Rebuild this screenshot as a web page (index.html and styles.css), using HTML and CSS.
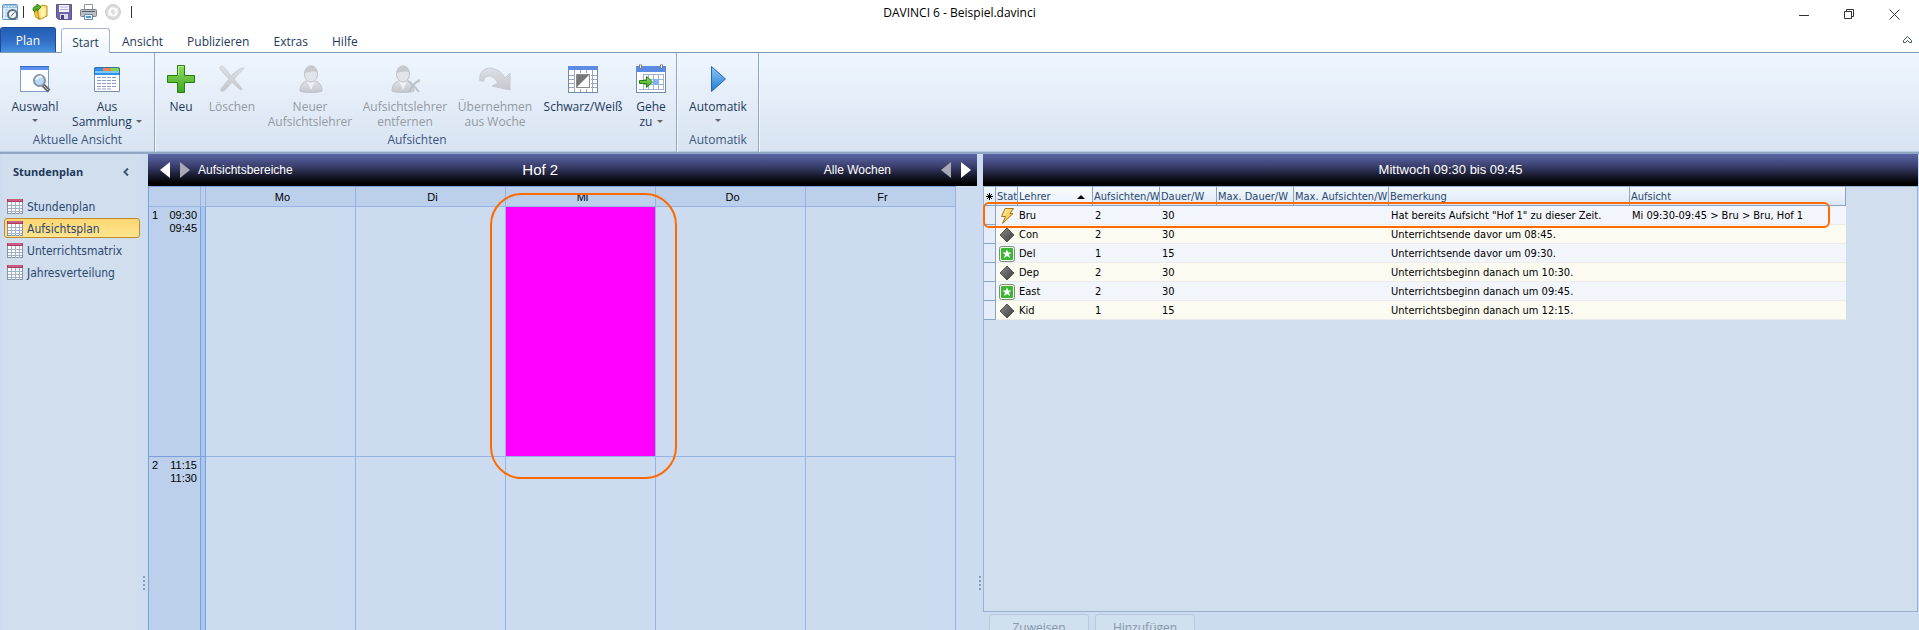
FILE: index.html
```html
<!DOCTYPE html>
<html lang="de">
<head>
<meta charset="utf-8">
<title>DAVINCI 6 - Beispiel.davinci</title>
<link rel="stylesheet" href="styles.css">
</head>
<body>
<svg class="defs" width="0" height="0" aria-hidden="true">
  <defs>
    <linearGradient id="gGreen" x1="0" y1="0" x2="0" y2="1"><stop offset="0" stop-color="#8fdc5a"/><stop offset="1" stop-color="#3fa524"/></linearGradient>
    <linearGradient id="gBlue" x1="0" y1="0" x2="0" y2="1"><stop offset="0" stop-color="#8ec8f5"/><stop offset="1" stop-color="#1f78d4"/></linearGradient>
    <linearGradient id="gGrey" x1="0" y1="0" x2="0" y2="1"><stop offset="0" stop-color="#dde0e5"/><stop offset="1" stop-color="#c4c8ce"/></linearGradient>
    <linearGradient id="gDark" x1="0" y1="0" x2="1" y2="1"><stop offset="0" stop-color="#8c8c8c"/><stop offset="1" stop-color="#3c3c3c"/></linearGradient>
    <linearGradient id="gGold" x1="0" y1="0" x2="1" y2="1"><stop offset="0" stop-color="#fff9c0"/><stop offset="1" stop-color="#f0a800"/></linearGradient>
    <symbol id="plan" viewBox="0 0 16 16">
      <rect x=".5" y=".5" width="15" height="14" fill="#fff" stroke="#8294b0"/>
      <path d="M0 0h16v3H0z" fill="#b03a62"/><path d="M1 1h14" stroke="#dc86a4"/>
      <path d="M1 6.500h14M1 9.500h14M1 12.500h14M4.500 3v12M8.500 3v12M12.500 3v12" stroke="#a3b0ca"/>
    </symbol>
    <symbol id="diamond" viewBox="0 0 16 16"><path d="M8 1l7 7-7 7-7-7z" fill="url(#gDark)" stroke="#555"/></symbol>
    <symbol id="star" viewBox="0 0 16 16">
      <rect x=".5" y=".5" width="15" height="15" rx="2" fill="#f2f7ef" stroke="#76936c"/>
      <rect x="2" y="2" width="12" height="12" rx="1" fill="#3fb535"/>
      <path d="M8 3.500l1.300 3h3.200L10 8.600l1 3.400-3-2-3 2 1-3.400-2.500-2.100h3.200z" fill="#fff"/>
    </symbol>
    <symbol id="bolt" viewBox="0 0 16 16"><path d="M6 .5h8.500L11 5.500h3L3.500 15.500l3-7H2.500z" fill="url(#gGold)" stroke="#a87414"/></symbol>
    <symbol id="person" viewBox="0 0 28 28">
      <path d="M3 26c0-6 3-9 7-10h8c4 1 7 4 7 10-3 2-19 2-22 0z" fill="url(#gGrey)" stroke="#bfc3c9"/>
      <path d="M10 16l4 9 4-9z" fill="#eef1f5"/>
      <ellipse cx="14" cy="9" rx="6.500" ry="8" fill="#e1e4e9" stroke="#bfc3c9"/>
      <path d="M7.500 8c0-10 13-10 13 0-2-3-9-1-13 0z" fill="#c6cacf"/>
    </symbol>
  </defs>
</svg>
<div class="app">
  <header class="titlebar">
    <div class="quick">
      <svg width="17" height="17" viewBox="0 0 17 17"><rect x=".5" y=".5" width="15" height="15" rx="1" fill="#dcecf8" stroke="#5f94c4"/><path d="M1 1h14v3H1z" fill="#9cc4e6"/><path d="M3 2.500h1M6 2.500h1M9 2.500h1M12 2.500h1" stroke="#fff"/><path d="M3 6h3M3 9h2M3 12h2" stroke="#a7c4de"/><circle cx="10.500" cy="10.500" r="4.500" fill="#f5f9fc" stroke="#5b7088" stroke-width="2"/><path d="M9 12.500l3-4" stroke="#49627c"/></svg>
      <span class="bar"></span>
      <button type="button" aria-label="Öffnen"><svg width="16" height="16" viewBox="0 0 16 16"><path d="M6 4l4-3 5 1v10l-6 3H6z" fill="#fbe37a" stroke="#b8901c"/><path d="M1.500 4l3 1 3 10-4-2z" fill="#f6cc3c" stroke="#b8901c"/><path d="M9 5l4-1v8l-4 2z" fill="#fff3b4"/><path d="M1 6c0-3 2-4 4-4V0l4 3-4 4V5C3 5 3 6 3 8z" fill="#52b52c" stroke="#2e7d15"/></svg></button>
      <button type="button" aria-label="Speichern"><svg width="16" height="16" viewBox="0 0 16 16"><path d="M.5.5h15v15h-13l-2-2z" fill="#7166a8" stroke="#5d5296"/><path d="M3 1h10v7H3z" fill="#f6f4fb"/><path d="M4 3h8M4 5.500h8" stroke="#b4aed2"/><path d="M4 10h8v5H4z" fill="#dcd9ea"/><path d="M5 11h3v4H5z" fill="#4b3f82"/></svg></button>
      <button type="button" aria-label="Drucken"><svg width="17" height="16" viewBox="0 0 17 16"><path d="M4.500 6V.5h8V6" fill="#fff" stroke="#8d96a0"/><rect x=".5" y="5.500" width="16" height="7" rx="1" fill="#b9bfc6" stroke="#7a828a"/><path d="M2 7.500h13" stroke="#555d66"/><path d="M4.500 10.500h8v5h-8z" fill="#e6f3fc" stroke="#70879c"/><path d="M6 13h5" stroke="#4e9ad4" stroke-width="2"/></svg></button>
      <button type="button" aria-label="Aktualisieren" disabled><svg width="16" height="16" viewBox="0 0 16 16"><circle cx="8" cy="8" r="7.500" fill="#dcdcdc" stroke="#cdcdcd"/><path d="M3.500 8.500C3 4 8 2 11 5l1.500-1.500v4h-4L10 6C8 4.500 5.500 5.500 5.500 8.500zM12.500 7.500C13 12 8 14 5 11l-1.500 1.500v-4h4L6 10c2 1.500 4.500.5 4.500-2.500z" fill="#fff"/></svg></button>
      <span class="bar last"></span>
    </div>
    <h1>DAVINCI 6 - Beispiel.davinci</h1>
    <div class="window-buttons">
      <button type="button" aria-label="Minimieren"><svg width="11" height="11" viewBox="0 0 11 11"><path d="M0 6.500h10" stroke="#333"/></svg></button>
      <button type="button" aria-label="Wiederherstellen"><svg width="11" height="11" viewBox="0 0 11 11"><path d="M.5 2.500h7v7h-7zM2.500 2.500v-2h7v7h-2" fill="none" stroke="#333"/></svg></button>
      <button type="button" aria-label="Schließen"><svg width="11" height="11" viewBox="0 0 11 11"><path d="M.5.500l10 10M10.500.5l-10 10" stroke="#333"/></svg></button>
    </div>
  </header>

  <nav class="tabs">
    <button type="button" class="tab file">Plan</button>
    <button type="button" class="tab active">Start</button>
    <button type="button" class="tab">Ansicht</button>
    <button type="button" class="tab">Publizieren</button>
    <button type="button" class="tab">Extras</button>
    <button type="button" class="tab">Hilfe</button>
    <button type="button" class="collapse" aria-label="Menüband minimieren"><svg width="9" height="8" viewBox="0 0 9 8"><path d="M.5 4.500l4-4 4 4v2h-2l-2-2-2 2h-2z" fill="#fff" stroke="#44546a"/></svg></button>
  </nav>

  <section class="ribbon">
    <div class="group">
      <div class="tools">
        <button type="button" class="tool w54"><svg width="32" height="32" viewBox="0 0 32 32"><rect x="1.500" y="3.500" width="28" height="25" fill="#fbfdff" stroke="#7f9cc8"/><path d="M1 3h29v4H1z" fill="#5b8ff0"/><path d="M1 3.500h29" stroke="#3a68c0"/><path d="M24 22l6 6" stroke="#6d6d6d" stroke-width="4"/><path d="M25 23l4 4" stroke="#bbb"/><circle cx="20.500" cy="17.500" r="5.500" fill="#b7d8f6" stroke="#8593a5" stroke-width="2"/><path d="M17 17c1-3 4-4 6-3" stroke="#f3faff" fill="none" stroke-width="2"/></svg><span>Auswahl</span><i class="caret"></i></button>
        <button type="button" class="tool w80"><svg width="32" height="32" viewBox="0 0 32 32"><path d="M3.500 11h25v17.500h-25z" fill="#fff" stroke="#7f90ac"/><path d="M3 12V6q0-2 2-2h22q2 0 2 2v6z" fill="#2f92ea"/><path d="M4 8h24v2H4z" fill="#7cc8fb"/><path d="M12 4h8v4h-8z" fill="#f08548"/><path d="M20 4h7q2 0 2 2v2h-9z" fill="#86d44a"/><path d="M3.500 12V6q0-1.500 2-1.500h21q2 0 2 1.500v6" stroke="#356fa8" fill="none"/><path d="M6 14.500h20M6 17.500h20M6 20.500h20M6 23.500h20M6 26h14" stroke="#8c9ac8" stroke-dasharray="4 1"/></svg><span>Aus</span><span>Sammlung <i class="caret"></i></span></button>
      </div>
      <h2>Aktuelle Ansicht</h2>
    </div>
    <div class="group wide">
      <div class="tools">
        <button type="button" class="tool w32"><svg width="32" height="32" viewBox="0 0 32 32"><path d="M12.500 2.500h7v10h10v7h-10v10h-7v-10h-10v-7h10z" fill="url(#gGreen)" stroke="#23820f"/><path d="M13.500 12V3.500h5" stroke="#bdf098" fill="none"/></svg><span>Neu</span></button>
        <button type="button" class="tool w52" disabled><svg width="32" height="32" viewBox="0 0 32 32"><path d="M4 4c2-2 4-1 11 9C20 8 26 4 28 5c0 1-6 6-10 11 5 6 9 10 8 11-3 0-8-6-10-8-4 5-8 11-11 9-2-2 4-7 8-12C8 11 3 6 4 4z" fill="url(#gGrey)" stroke="#ccd0d6"/></svg><span>Löschen</span></button>
        <button type="button" class="tool w86" disabled><svg width="32" height="32" viewBox="0 0 32 32"><use href="#person" x="3" y="1" width="28" height="30"/></svg><span>Neuer</span><span>Aufsichtslehrer</span></button>
        <button type="button" class="tool w86" disabled><svg width="32" height="32" viewBox="0 0 32 32"><use href="#person" x="0" y="1" width="28" height="30"/><path d="M19 18q5 3 11 11M31 17q-7 3-11 12" stroke="#bdc1c7" stroke-width="2" fill="none"/></svg><span>Aufsichtslehrer</span><span>entfernen</span></button>
        <button type="button" class="tool w76" disabled><svg width="34" height="32" viewBox="0 0 34 32"><path d="M2 18C0 8 9 3 16 6c5 1 9 5 11 9l5-5v17l-18-4 6-3c-3-5-7-8-10-7-4 1-4 3-4 5z" fill="url(#gGrey)" stroke="#c6cad0"/></svg><span>Übernehmen</span><span>aus Woche</span></button>
        <button type="button" class="tool w82"><svg width="32" height="32" viewBox="0 0 32 32"><rect x="1.500" y="3.500" width="29" height="26" fill="#fff" stroke="#7389a8"/><path d="M1 3h30v4H1z" fill="#5b8be4"/><path d="M2 12.500h28M2 16.500h28M2 20.500h28M2 24.500h28M7.500 7v22M13.500 7v22M19.500 7v22M25.500 7v22" stroke="#9aa9c2"/><rect x="8" y="10" width="16" height="16" fill="#fff"/><rect x="9.500" y="11.500" width="13" height="13" fill="#fff" stroke="#8a8a8a"/><path d="M10 12h12l-12 12z" fill="#777"/></svg><span>Schwarz/Weiß</span></button>
        <button type="button" class="tool w36"><svg width="32" height="32" viewBox="0 0 32 32"><rect x="1.500" y="3.500" width="29" height="26" fill="#fff" stroke="#7389a8"/><path d="M1 3h30v6H1z" fill="#5b8be4"/><path d="M8 11.500h21M8 16.500h21M8 21.500h21M4 26.500h25M8.500 11v16M13.500 11v16M18.500 11v16M23.500 11v16M28.500 11v16" stroke="#a5b2ca"/><rect x="18" y="16" width="6" height="6" fill="#86b0f6"/><path d="M4.500 17.500h7v-4l6 5.500-6 5.500v-4h-7z" fill="url(#gGreen)" stroke="#23820f"/><path d="M5.500 1.500v4M26.500 1.500v4" stroke="#7b7b7b" stroke-width="3"/><path d="M5.500 2v3M26.500 2v3" stroke="#eee"/></svg><span>Gehe</span><span>zu <i class="caret"></i></span></button>
      </div>
      <h2>Aufsichten</h2>
    </div>
    <div class="group">
      <div class="tools">
        <button type="button" class="tool w66"><svg width="32" height="32" viewBox="0 0 32 32"><path d="M9.500 3.500L23.500 16 9.500 28.500z" fill="url(#gBlue)" stroke="#2768ac"/></svg><span>Automatik</span><i class="caret"></i></button>
      </div>
      <h2>Automatik</h2>
    </div>
  </section>

  <main class="work">
    <aside class="sidebar">
      <div class="side-head"><h2>Stundenplan</h2><button type="button" aria-label="Einklappen"><svg width="6" height="8" viewBox="0 0 6 8"><path d="M5 .5L1.500 4 5 7.500" fill="none" stroke="#3f5878" stroke-width="2"/></svg></button></div>
      <nav>
        <a href="#"><svg width="16" height="16"><use href="#plan"/></svg>Stundenplan</a>
        <a href="#" class="selected"><svg width="16" height="16"><use href="#plan"/></svg>Aufsichtsplan</a>
        <a href="#"><svg width="16" height="16"><use href="#plan"/></svg>Unterrichtsmatrix</a>
        <a href="#"><svg width="16" height="16"><use href="#plan"/></svg>Jahresverteilung</a>
      </nav>
      <div class="grip"></div>
    </aside>

    <section class="calendar">
      <div class="panel-head">
        <button type="button" class="arrow left" aria-label="Zurück"></button>
        <button type="button" class="arrow right dim" aria-label="Vor"></button>
        <span class="area">Aufsichtsbereiche</span>
        <h2>Hof 2</h2>
        <span class="weeks">Alle Wochen</span>
        <button type="button" class="arrow left dim" aria-label="Vorige Woche"></button>
        <button type="button" class="arrow right" aria-label="Nächste Woche"></button>
      </div>
      <div class="week">
        <div class="head"></div><div class="head gap"></div>
        <div class="head">Mo</div><div class="head">Di</div><div class="head">Mi</div><div class="head">Do</div><div class="head">Fr</div>
        <div class="time"><span>1</span><span>09:30<br>09:45</span></div><div class="rail"></div>
        <div class="slot"></div><div class="slot"></div><div class="slot marked"><div class="outline slot-outline"></div></div><div class="slot"></div><div class="slot"></div>
        <div class="time last"><span>2</span><span>11:15<br>11:30</span></div><div class="rail last"></div>
        <div class="slot last"></div><div class="slot last"></div><div class="slot last"></div><div class="slot last"></div><div class="slot last"></div>
      </div>
    </section>

    <div class="splitter"><div class="grip"></div></div>

    <section class="details">
      <div class="panel-head center">Mittwoch 09:30 bis 09:45</div>
      <div class="list">
        <table>
          <colgroup><col class="c-mark"><col class="c-state"><col class="c-teacher"><col class="c-count"><col class="c-time"><col class="c-maxtime"><col class="c-maxcount"><col class="c-note"><col class="c-duty"></colgroup>
          <thead><tr><th class="mark" aria-label="Markierung"><svg width="7" height="7" viewBox="0 0 7 7"><path d="M3.500 0v7M0 3.500h7M1 1l5 5M6 1L1 6" stroke="#000"/></svg></th><th>Status</th><th class="sorted">Lehrer</th><th>Aufsichten/W</th><th>Dauer/W</th><th>Max. Dauer/W</th><th>Max. Aufsichten/W</th><th>Bemerkung</th><th>Aufsicht</th></tr></thead>
          <tbody>
            <tr><td></td><td><svg width="16" height="16"><use href="#bolt"/></svg></td><td>Bru</td><td>2</td><td>30</td><td></td><td></td><td>Hat bereits Aufsicht "Hof 1" zu dieser Zeit.</td><td>Mi 09:30-09:45 &gt; Bru &gt; Bru, Hof 1</td></tr>
            <tr><td></td><td><svg width="16" height="16"><use href="#diamond"/></svg></td><td>Con</td><td>2</td><td>30</td><td></td><td></td><td>Unterrichtsende davor um 08:45.</td><td></td></tr>
            <tr><td></td><td><svg width="16" height="16"><use href="#star"/></svg></td><td>Del</td><td>1</td><td>15</td><td></td><td></td><td>Unterrichtsende davor um 09:30.</td><td></td></tr>
            <tr><td></td><td><svg width="16" height="16"><use href="#diamond"/></svg></td><td>Dep</td><td>2</td><td>30</td><td></td><td></td><td>Unterrichtsbeginn danach um 10:30.</td><td></td></tr>
            <tr><td></td><td><svg width="16" height="16"><use href="#star"/></svg></td><td>East</td><td>2</td><td>30</td><td></td><td></td><td>Unterrichtsbeginn danach um 09:45.</td><td></td></tr>
            <tr><td></td><td><svg width="16" height="16"><use href="#diamond"/></svg></td><td>Kid</td><td>1</td><td>15</td><td></td><td></td><td>Unterrichtsbeginn danach um 12:15.</td><td></td></tr>
          </tbody>
        </table>
        <div class="outline row-outline"></div>
      </div>
      <footer class="actions"><button type="button" disabled>Zuweisen</button><button type="button" disabled>Hinzufügen</button></footer>
    </section>
  </main>
</div>
</body>
</html>
```

FILE: styles.css
```css
* { box-sizing: border-box; }
body { margin: 0; overflow: hidden; font: 12px/15px "Open Sans", "Noto Sans", sans-serif; color: #1e395b; }
button { margin: 0; padding: 0; border: 0; background: none; font: inherit; color: inherit; }
h1, h2 { margin: 0; font: inherit; }
svg { display: block; flex: none; }
.defs { position: absolute; }
.app { display: flex; flex-direction: column; height: 100vh; background: #ccdbf0; }

.titlebar { display: grid; grid-template-columns: 1fr auto 1fr; height: 27px; padding-bottom: 3px; background: #fff; align-items: center; }
.titlebar h1 { color: #000; }
.quick { display: flex; align-items: center; gap: 8px; padding-left: 2px; }
.bar { width: 1px; height: 12px; margin: 0 0 0 -4px; background: #333; }
.bar.last { margin-left: 2px; }
.window-buttons { display: flex; justify-content: flex-end; gap: 34px; padding: 4px 19px 0 0; }

.tabs { display: flex; height: 26px; background: #fff; border-bottom: 1px solid #7a98b8; }
.tab { padding: 4px 12px 0; }
.tab.file { width: 56px; margin-right: 5px; padding: 0; color: #fff; background: linear-gradient(#2360b4, #2f6cc4 50%, #4590e0); border: 1px solid #1c4c98; border-bottom: 0; border-radius: 3px 3px 0 0; }
.tab.active { width: 49px; margin: 1px 0 -1px; padding: 2px 0 0; background: linear-gradient(#fff, #eff5fd); border: 1px solid #a3b8d2; border-bottom: 0; border-radius: 3px 3px 0 0; }
.collapse { margin: 0 7px 0 auto; }

.ribbon { display: flex; height: 101px; background: linear-gradient(#eff6fe, #d8e4f2 96px); border-bottom: 2px solid #90a6c3; box-shadow: inset 0 -1px #b8cbe2; }
.group { display: flex; flex-direction: column; padding: 10px 7px 0 8px; border-right: 1px solid #8ea6c8; box-shadow: 1px 0 #f4f8fd; }
.group.wide { padding: 10px 7px 0 10px; }
.group h2 { padding: 1px 0 0; text-align: center; color: #3b5680; }
.tools { display: flex; gap: 9px; height: 68px; }
.group:first-child .tools { gap: 5px; }
.tool { display: flex; flex-direction: column; align-items: center; white-space: nowrap; }
.tool svg { margin-bottom: 4px; }
.tool:disabled { color: #949aa2; }
.caret { display: inline-block; border: 3px solid transparent; border-top-color: #666; border-bottom: 0; vertical-align: 3px; margin-left: 1px; }
.tool > .caret { margin: 5px 0 0; }
.w32 { width: 32px; } .w36 { width: 36px; } .w52 { width: 52px; } .w54 { width: 54px; } .w66 { width: 66px; }
.w76 { width: 76px; } .w80 { width: 80px; } .w82 { width: 82px; } .w86 { width: 86px; }

.work { display: flex; flex: 1; min-height: 0; }
.sidebar { position: relative; width: 148px; flex: none; padding-right: 7px; background: linear-gradient(90deg, #ccdbf0, #d0deee 4px, #d0deee 136px, #ccdbf0); font: 12px/16px "DejaVu Sans Condensed", "DejaVu Sans", sans-serif; }
.side-head { display: flex; justify-content: space-between; align-items: center; height: 36px; padding: 0 12px 0 13px; }
.side-head h2 { font: bold 11px/16px "Open Sans", sans-serif; }
.sidebar nav { display: flex; flex-direction: column; gap: 2px; padding: 6px 1px 0 4px; }
.sidebar a { display: flex; align-items: center; gap: 4px; height: 20px; padding: 1px 0 0 2px; border: 1px solid transparent; border-radius: 3px; color: #2c4870; text-decoration: none; white-space: nowrap; }
.sidebar a.selected { background: linear-gradient(#fdd773, #ffe58e); border-color: #c28a30; }
.grip { position: absolute; right: 3px; bottom: 40px; width: 2px; height: 14px; background: repeating-linear-gradient(#839dc0 0 2px, transparent 2px 4px); }

.panel-head { display: flex; align-items: center; flex: none; height: 32px; padding: 0 6px 0 12px; color: #fff; background: linear-gradient(#5b66a6, #3d4272 35%, #1c1e34 65%, #000 92%); font: 12px/16px "Liberation Sans", Arial, sans-serif; }
.panel-head.center { justify-content: center; padding-left: 6px; font-size: 13px; }
.panel-head h2 { flex: 1; padding-right: 36px; text-align: center; font-size: 15px; }
.arrow { border: 8px solid transparent; }
.arrow.left { border-width: 8px 10px 8px 0; border-right-color: #fff; }
.arrow.right { border-width: 8px 0 8px 10px; border-left-color: #fff; }
.arrow.right.dim { margin: 0 8px 0 10px; border-left-color: #a9a9b6; }
.arrow.left.dim { margin: 0 10px 0 50px; border-right-color: #a9a9b6; }

.calendar { display: flex; flex-direction: column; flex: 829 1 0; min-width: 0; }
.week { display: grid; flex: 1; grid-template: 20px 250px 1fr / 52px 5px repeat(5, 1fr); margin-right: 21px; border: solid #7a9fdb; border-width: 1px 0 0 1px; font: 11px/13px "Liberation Sans", Arial, sans-serif; color: #000; }
.week > * { border: solid #97b3e2; border-width: 0 1px 1px 0; }
.week .head { padding: 4px 0 0 4px; text-align: center; background: #bcd0ec; }
.week .head.gap { padding: 0; }
.week .time { display: flex; justify-content: space-between; padding: 2px 3px 0 3px; background: #bcd0ec; border-color: #7a9fdb; }
.week .rail { background: #a8c8f0; border-color: #7a9fdb; }
.week .marked { position: relative; background: #f0f; }
.week .last { border-bottom: 0; }
.outline { position: absolute; border: 2px solid #ff6a00; pointer-events: none; }
.slot-outline { inset: -14px -22px -23px -16px; border-radius: 32px; }

.splitter { position: relative; width: 6px; flex: none; }
.splitter .grip { right: 2px; }

.details { display: flex; flex-direction: column; flex: 935 1 0; min-width: 0; padding-right: 1px; }
.list { position: relative; flex: 1; background: #d0deee; border: 1px solid #9ab0d0; }
table { width: 862px; table-layout: fixed; border-collapse: separate; border-spacing: 0; font: 11px/14px "DejaVu Sans Condensed", "DejaVu Sans", sans-serif; color: #000; }
.c-mark { width: 12px; } .c-state { width: 22px; } .c-teacher { width: 75px; } .c-count { width: 67px; } .c-time { width: 57px; }
.c-maxtime { width: 77px; } .c-maxcount { width: 95px; } .c-note { width: 241px; } .c-duty { width: 216px; }
th, td { height: 19px; padding: 2px 0 0 1px; overflow: hidden; white-space: nowrap; text-align: left; font-weight: normal; }
th { color: #2c4870; background: linear-gradient(#f3f8fe, #dce8f6); border: solid #8aa2c4; border-width: 0 1px 1px 0; }
th.mark { padding: 0 0 0 2px; }
th.sorted { background: linear-gradient(#fafcff, #e9f1fb); }
th.sorted::after { content: ""; float: right; margin: 5px 7px 0 0; border: 4px solid transparent; border-top: 0; border-bottom-color: #000; }
td { background: #f2f5fb; border-bottom: 1px solid #ececec; }
tr:nth-child(even) td { background: #fcfbf2; }
tbody tr td:first-child, tbody tr:nth-child(even) td:first-child { background: #e4edf9; border: solid #8aa2c4; border-width: 0 1px 1px 0; }
td:nth-child(2) { padding: 1px 0 0 3px; }
td:nth-child(n+4) { padding-left: 2px; }
.row-outline { top: 15px; left: -1px; width: 847px; height: 26px; border-radius: 6px; }
.actions { display: flex; flex: none; gap: 6px; height: 18px; padding: 2px 6px 0; }
.actions button { width: 100px; height: 26px; color: #8796a8; background: #d0e0ef; border: 1px solid #b9c9dd; border-radius: 3px; }
```
